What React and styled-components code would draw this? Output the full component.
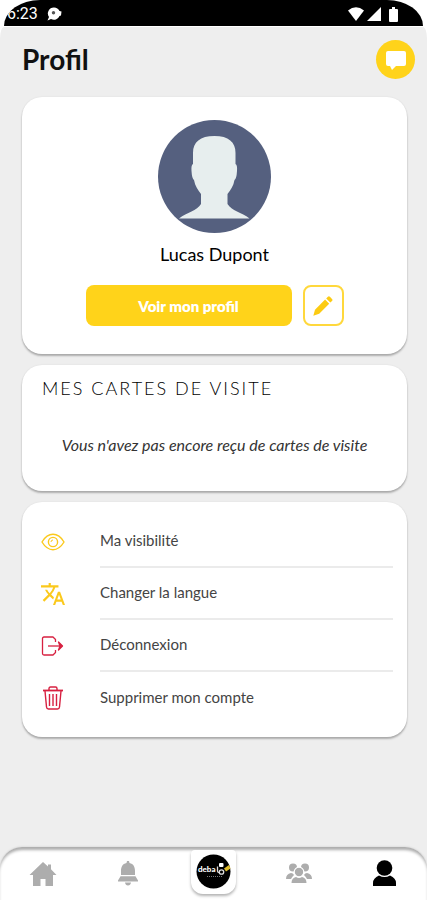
import React from "react";
import styled, { createGlobalStyle } from "styled-components";

const GlobalStyle = createGlobalStyle`
  *, *::before, *::after { box-sizing: border-box; }
  body {
    margin: 0;
    background: #ffffff;
    color: #111111;
    font-family: Lato, "Liberation Sans", sans-serif;
  }
  button { font: inherit; color: inherit; border: 0; padding: 0; background: none; cursor: pointer; }
`;

const Screen = styled.div`
  display: flex;
  flex-direction: column;
  min-height: 100vh;
  background: #ffffff;
`;

const StatusBar = styled.div`
  display: flex;
  align-items: center;
  justify-content: space-between;
  height: 26px;
  margin: 0 4px;
  padding: 2px 22px 0 3px;
  overflow: hidden;
  border-radius: 36px 36px 0 0 / 26px 26px 0 0;
  background: #000000;
  color: #ffffff;
  font-family: Roboto, sans-serif;
  font-size: 16px;
  line-height: 20px;
`;

const StatusGroup = styled.div`
  display: flex;
  align-items: center;
  gap: ${(p) => p.$gap}px;
`;

const Content = styled.main`
  flex: 1;
  display: flex;
  flex-direction: column;
  gap: 11px;
  margin-top: 1px;
  padding: 12px 20px 24px 22px;
  border-radius: 4px 4px 0 0 / 12px 12px 0 0;
  background: #eeeeee;
`;

const Header = styled.header`
  display: flex;
  align-items: flex-start;
  justify-content: space-between;
  height: 47px;
  margin-right: -8px;
`;

const Title = styled.h1`
  margin: 4px 0 0;
  font-size: 28px;
  line-height: 32px;
  font-weight: 700;
`;

const ChatButton = styled.button`
  display: grid;
  place-items: center;
  width: 39px;
  height: 39px;
  margin-top: 1px;
  border-radius: 50%;
  background: #ffd31a;
`;

const Card = styled.section`
  border-radius: 20px;
  background: #ffffff;
  box-shadow: 0 2px 2px rgba(0, 0, 0, 0.27), 0 0 2px rgba(0, 0, 0, 0.08);
`;

const ProfileCard = styled(Card)`
  display: flex;
  flex-direction: column;
  align-items: center;
  padding: 23px 20px 28px;
`;

const Name = styled.h2`
  margin: 9px 0 19px;
  font-size: 18px;
  line-height: 24px;
  font-weight: 400;
  color: #000000;
`;

const Actions = styled.div`
  display: flex;
  justify-content: center;
  gap: 11px;
  width: 100%;
`;

const PrimaryButton = styled.button`
  flex: 0 1 206px;
  height: 41px;
  border-radius: 8px;
  background: #ffd31a;
  && { color: #ffffff; font-size: 15px; font-weight: 800; }
`;

const EditButton = styled.button`
  display: grid;
  place-items: center;
  width: 41px;
  height: 41px;
  border-radius: 8px;
  && { border: 2px solid #ffd83c; }
`;

const CardsCard = styled(Card)`
  padding: 11px 20px 34px;
`;

const SectionTitle = styled.h2`
  margin: 0;
  font-size: 18px;
  line-height: 24px;
  font-weight: 300;
  letter-spacing: 2px;
  text-transform: uppercase;
  color: #000000;
`;

const Empty = styled.p`
  margin: 33px 0 0;
  font-size: 16px;
  line-height: 24px;
  font-style: italic;
  font-weight: 400;
  text-align: center;
  color: #333333;
`;

const Menu = styled(Card)`
  padding: 14px 14px 13px 19px;
`;

const MenuRow = styled.button`
  display: flex;
  align-items: center;
  width: 100%;
  height: 52px;
  text-align: left;
`;

const RowIcon = styled.span`
  display: flex;
  flex: 0 0 59px;
  color: ${(p) => p.$color};
`;

const RowLabel = styled.span`
  flex: 1;
  align-self: stretch;
  display: flex;
  align-items: center;
  font-size: 15px;
  line-height: 20px;
  font-weight: 400;
  color: #444444;
  padding-bottom: 2px;
  ${MenuRow}:not(:last-child) & { border-bottom: 2px solid #ebebeb; }
`;

const NavBar = styled.nav`
  background: #eeeeee;
`;

const NavInner = styled.div`
  display: grid;
  grid-template-columns: repeat(5, 1fr);
  height: 53px;
  border-radius: 22px 22px 0 0;
  background: #ffffff;
  box-shadow: inset 0 4px 3px -1px #adadad, 0 0 2px #c4c4c4;
  clip-path: inset(-3px 0 0 0);
`;

const NavItem = styled.button`
  display: grid;
  place-items: center;
  && { color: ${(p) => (p.$active ? "#000000" : "#adadad")}; }
`;

const LogoTile = styled.span`
  display: grid;
  place-items: center;
  width: 45px;
  height: 44px;
  margin-bottom: 4px;
  border-radius: 4px 4px 12px 12px;
  background: #ffffff;
  box-shadow: 0 2px 3px rgba(0, 0, 0, 0.3);
`;

const DiscLogo = () => (
  <svg width="35" height="35" viewBox="0 0 35 35" aria-hidden="true">
    <circle cx="17.5" cy="17.5" r="17" fill="#000" />
    <text x="2" y="18" fill="#fff" fontFamily="Lato, sans-serif" fontSize="8" fontWeight="900">deba</text>
    <path d="M21.500 12.500v4.500q0 1.500 1.500 1.500" fill="none" stroke="#ddd" strokeWidth="1.300" />
    <circle cx="25.500" cy="18" r="2.200" fill="none" stroke="#ddd" strokeWidth="1.300" />
    <rect x="23" y="9" width="4.500" height="4" rx="1" fill="#fff" />
    <path d="M28 14.500l5-3.500 1.500 3.500-4.500 3z" fill="#dfbd2b" />
    <path d="M11 22.500h15" stroke="#777" strokeWidth="1" strokeDasharray="1 1" />
  </svg>
);

const Avatar = () => (
  <svg width="113" height="113" viewBox="0 0 113 113" role="img" aria-label="Photo de profil">
    <circle cx="56.500" cy="56.500" r="56.500" fill="#55607f" />
    <path
      d="M56.500 16C42 16 35 22 35 33v11q-2 1-1.500 7 .5 8 2.500 9c1 6 4 10 7 14v10c-4 7-14 8-22 14.500h70.500c-8-6.500-18-7.500-22-14.500V74c3-4 6-8 7-14q2-1 2.500-9 .5-6-1.500-7V33c0-11-7-17-21-17z"
      fill="#e7eeee"
    />
  </svg>
);

const Pencil = () => (
  <svg width="20" height="20" viewBox="0 0 20 20" fill="#fccb12" aria-hidden="true">
    <path d="M0.300 19.700l1.700-6L12.100 3.600l4.100 4.100L6.200 17.700z" />
    <path d="M13.200 2.500L14.900.8q1-1 2 0l2.100 2.100q1 1 0 2l-1.700 1.700z" />
  </svg>
);

const Eye = () => (
  <svg width="24" height="18" viewBox="0 0 24 18" fill="none" stroke="currentColor" strokeWidth="1.400" aria-hidden="true">
    <path d="M1 9c3-5 7-7.700 11-7.700S20 4 23 9c-3 5-7 7.700-11 7.700S4 14 1 9z" />
    <circle cx="12" cy="9" r="4.600" />
    <path d="M10 9A2 2 0 0 1 12 7" strokeWidth="1" />
  </svg>
);

const Translate = () => (
  <svg width="24" height="22" viewBox="1 2 22 20" fill="currentColor" aria-hidden="true">
    <path d="M12.870 15.070l-2.540-2.510.03-.03A17.520 17.520 0 0 0 14.070 6H17V4h-7V2H8v2H1v2h11.170C11.500 7.920 10.440 9.750 9 11.350 8.070 10.320 7.300 9.190 6.690 8h-2c.73 1.630 1.730 3.170 2.980 4.560l-5.090 5.020L4 19l5-5 3.110 3.110.76-2.040zM18.500 10h-2L12 22h2l1.120-3h4.750L21 22h2l-4.500-12zm-2.620 7l1.620-4.330L19.120 17h-3.240z" />
  </svg>
);

const Logout = () => (
  <svg width="24" height="20" viewBox="0 0 24 20" fill="none" stroke="currentColor" strokeWidth="1.300" strokeLinejoin="round" aria-hidden="true">
    <path d="M14.500 6V3.500L12 1H3Q1.500 1 1.500 2.500v15Q1.500 19 3 19h9l2.500-2.500V14" />
    <path d="M7 10h12" />
    <path d="M17.500 6l4 4-4 4 1.500-4z" fill="currentColor" />
  </svg>
);

const Trash = () => (
  <svg width="24" height="24" viewBox="0 0 24 24" fill="none" stroke="currentColor" strokeWidth="1.400" aria-hidden="true">
    <path d="M2 4.500h20" strokeWidth="1.800" />
    <path d="M8 4V2.500Q8 1 9.500 1h5Q16 1 16 2.500V4" />
    <path d="M4 5l1.500 16Q5.700 23 7.500 23h9q1.800 0 2-2L20 5" />
    <path d="M8.500 8v12M12 8v12M15.500 8v12" />
  </svg>
);

const Home = () => (
  <svg width="28" height="26" viewBox="0 0 28 26" fill="currentColor" aria-hidden="true">
    <path d="M14 1l5 4.500V3.500h3v4.700L27.500 14H24v11h-7.500v-7h-5v7H4V14H.5z" />
  </svg>
);

const Bell = () => (
  <svg width="20" height="25" viewBox="0 0 20 25" fill="currentColor" aria-hidden="true">
    <path d="M9 0h2l.5 2c4 .8 5.500 4 5.500 8v4H3v-4c0-4 1.500-7.200 5.500-8z" />
    <path d="M2.500 15.300h15L20 19.500v1H0v-1zM7 21.500h6q-.5 3-3 3t-3-3z" />
  </svg>
);

const Group = () => (
  <svg width="26" height="22" viewBox="0 0 26 22" fill="currentColor" aria-hidden="true">
    <circle cx="7" cy="4.500" r="4" />
    <circle cx="19" cy="4.500" r="4" />
    <path d="M0 16q0-5 5-6 2 0 3 2-2 2-3 4zM26 16q0-5-5-6-2 0-3 2 2 2 3 4z" />
    <circle cx="13" cy="9" r="4.800" stroke="#fff" strokeWidth="1.200" />
    <path d="M5.500 20q0-5 4.500-6 3 1.800 6 0 4.500 1 4.500 6z" />
  </svg>
);

const Person = () => (
  <svg width="23" height="27" viewBox="0 0 23 27" fill="currentColor" aria-hidden="true">
    <circle cx="11.500" cy="8" r="7.800" />
    <path d="M0 26v-3q0-5 6-7.500 5.500 3.200 11 0 6 2.500 6 7.500v3z" />
  </svg>
);

const menu = [
  { label: "Ma visibilité", icon: Eye, color: "#fbc91c" },
  { label: "Changer la langue", icon: Translate, color: "#fbc91c" },
  { label: "Déconnexion", icon: Logout, color: "#d72040" },
  { label: "Supprimer mon compte", icon: Trash, color: "#d72040" },
];

export default function App() {
  return (
    <Screen>
      <GlobalStyle />
      <StatusBar>
        <StatusGroup $gap={9}>
          <span>6:23</span>
          <svg width="15" height="14" viewBox="0 0 15 14" aria-hidden="true">
            <path d="M7 .5a6 6 0 0 1 5.500 3.500l2 .5-.5 4-1.500.5A6 6 0 0 1 4 12L.5 13.500 2 10A6 6 0 0 1 7 .5z" fill="#fff" />
            <circle cx="6.500" cy="5.800" r="1.700" fill="#555" />
          </svg>
        </StatusGroup>
        <StatusGroup $gap={3}>
          <svg width="16" height="14" viewBox="0 0 16 14" fill="#fff" aria-hidden="true">
            <path d="M0 3.500Q8-3 16 3.500L8 14z" />
          </svg>
          <svg width="14" height="14" viewBox="0 0 14 14" fill="#fff" aria-hidden="true">
            <path d="M14 0v14H0z" />
          </svg>
          <svg width="17" height="15" viewBox="0 0 17 15" fill="#fff" aria-hidden="true">
            <path d="M6 2h2V0h3v2h2q1 0 1 1v11q0 1-1 1H6q-1 0-1-1V3q0-1 1-1z" />
          </svg>
        </StatusGroup>
      </StatusBar>
      <Content>
        <Header>
          <Title>Profil</Title>
          <ChatButton aria-label="Messages">
            <svg width="20" height="20" viewBox="0 0 20 20" fill="#fff" aria-hidden="true">
              <path d="M2 1h16q2 0 2 2v11q0 2-2 2h-8l-4 4-2-4H2q-2 0-2-2V3q0-2 2-2z" />
            </svg>
          </ChatButton>
        </Header>
        <ProfileCard>
          <Avatar />
          <Name>Lucas Dupont</Name>
          <Actions>
            <PrimaryButton>Voir mon profil</PrimaryButton>
            <EditButton aria-label="Modifier le profil"><Pencil /></EditButton>
          </Actions>
        </ProfileCard>
        <CardsCard>
          <SectionTitle>Mes cartes de visite</SectionTitle>
          <Empty>Vous n'avez pas encore reçu de cartes de visite</Empty>
        </CardsCard>
        <Menu>
          {menu.map(({ label, icon: Icon, color }) => (
            <MenuRow key={label}>
              <RowIcon $color={color}><Icon /></RowIcon>
              <RowLabel>{label}</RowLabel>
            </MenuRow>
          ))}
        </Menu>
      </Content>
      <NavBar aria-label="Navigation principale">
        <NavInner>
          <NavItem aria-label="Accueil"><Home /></NavItem>
          <NavItem aria-label="Notifications"><Bell /></NavItem>
          <NavItem aria-label="Debat"><LogoTile><DiscLogo /></LogoTile></NavItem>
          <NavItem aria-label="Communauté"><Group /></NavItem>
          <NavItem aria-label="Profil" aria-current="page" $active><Person /></NavItem>
        </NavInner>
      </NavBar>
    </Screen>
  );
}
